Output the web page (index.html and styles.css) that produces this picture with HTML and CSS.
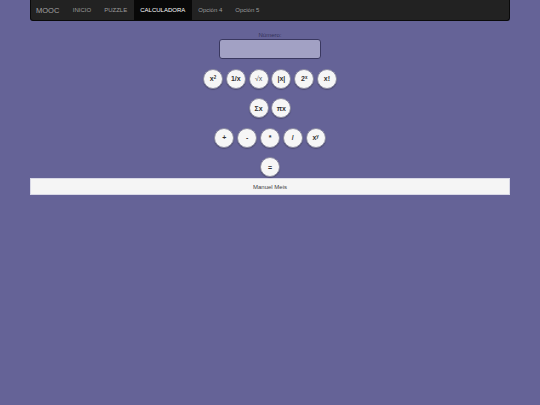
FILE: index.html
```html
<!DOCTYPE html>
<html lang="es">
<head>
<meta charset="utf-8">
<title>MOOC Calculadora</title>
<link rel="stylesheet" href="styles.css">
</head>
<body>
<div class="page">
  <nav class="navbar">
    <span class="brand">MOOC</span>
    <a class="nav-link">INICIO</a>
    <a class="nav-link">PUZZLE</a>
    <a class="nav-link active">CALCULADORA</a>
    <a class="nav-link">Opción 4</a>
    <a class="nav-link">Opción 5</a>
  </nav>
  <main class="calc">
    <label class="label">Número:</label>
    <div class="input"></div>
    <div class="row">
      <button class="btn">x<sup>2</sup></button>
      <button class="btn">1/x</button>
      <button class="btn light">√x</button>
      <button class="btn">|x|</button>
      <button class="btn">2<sup>x</sup></button>
      <button class="btn">x!</button>
    </div>
    <div class="row">
      <button class="btn">Σx</button>
      <button class="btn">πx</button>
    </div>
    <div class="row">
      <button class="btn">+</button>
      <button class="btn">-</button>
      <button class="btn">*</button>
      <button class="btn">/</button>
      <button class="btn">x<sup>y</sup></button>
    </div>
    <div class="row">
      <button class="btn">=</button>
    </div>
  </main>
  <footer class="footer">Manuel Meis</footer>
</div>
</body>
</html>
```
FILE: styles.css
```css
html, body {
  margin: 0;
  padding: 0;
  background: #656397;
  font-family: "Liberation Sans", Arial, sans-serif;
}
.page {
  width: 480px;
  margin: 0 auto;
}
.navbar {
  height: 21px;
  background: #222;
  border: 1px solid #0a0a0a;
  border-top: none;
  border-radius: 0 0 3px 3px;
  display: flex;
  align-items: stretch;
  padding-left: 5px;
  box-sizing: border-box;
}
.brand {
  color: #a4a4a4;
  font-size: 7.5px;
  display: flex;
  align-items: center;
  margin-right: 7px;
}
.nav-link {
  color: #9d9d9d;
  font-size: 6px;
  display: flex;
  align-items: center;
  padding: 0 6.5px;
}
.nav-link.active {
  background: #080808;
  color: #fff;
}
.calc {
  display: flex;
  flex-direction: column;
  align-items: center;
  padding-bottom: 1px;
}
.label {
  font-size: 6px;
  color: #34325a;
  margin-top: 10px;
  line-height: 8px;
}
.input {
  width: 102px;
  height: 20px;
  box-sizing: border-box;
  background: #a2a1c4;
  border: 1px solid #3a3860;
  border-radius: 3px;
}
.row {
  display: flex;
  gap: 2.8px;
  margin-top: 9.5px;
}
.btn {
  width: 20px;
  height: 20px;
  border-radius: 50%;
  background: #f6f6f6;
  border: 1px solid #8a8aa0;
  box-shadow: 0 1px 1px rgba(0,0,0,0.25);
  padding: 0;
  font-family: "Liberation Sans", Arial, sans-serif;
  font-weight: bold;
  font-size: 7px;
  color: #333;
  display: flex;
  align-items: center;
  justify-content: center;
  box-sizing: border-box;
  line-height: 1;
}
.btn.light {
  font-weight: normal;
  color: #555;
}
.btn sup {
  font-size: 4.5px;
  vertical-align: 3px;
}
.footer {
  height: 17px;
  box-sizing: border-box;
  background: #f5f5f5;
  border: 1px solid #d8d8e6;
  display: flex;
  align-items: center;
  justify-content: center;
  font-size: 6px;
  color: #444;
}
```
